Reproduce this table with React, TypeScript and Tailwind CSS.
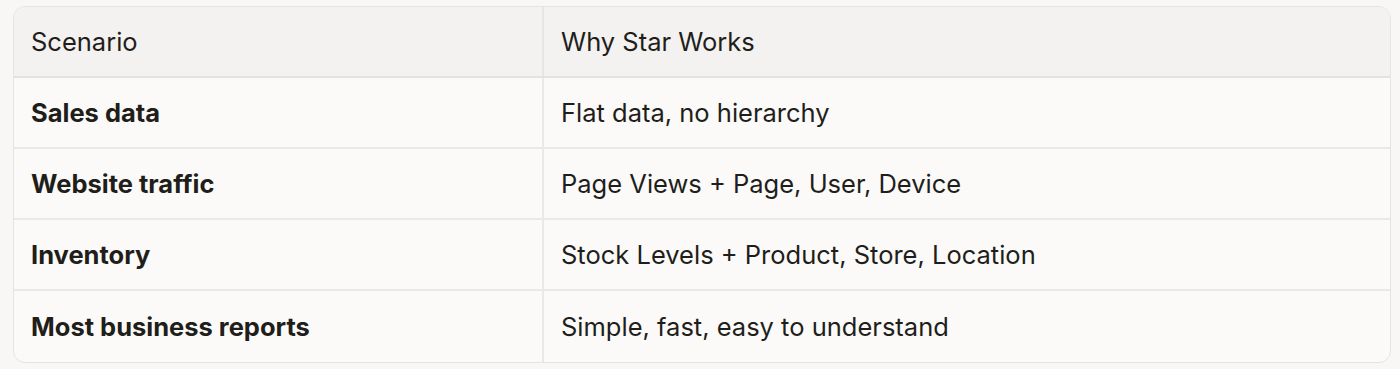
import React from "react";

const rows = [
  ["Sales data", "Flat data, no hierarchy"],
  ["Website traffic", "Page Views + Page, User, Device"],
  ["Inventory", "Stock Levels + Product, Store, Location"],
  ["Most business reports", "Simple, fast, easy to understand"],
];

export default function App() {
  return (
    <div className="w-[1400px] h-[369px] bg-[#f8f7f5] pt-[6px] pl-[13px] pr-[9px]" style={{ fontFamily: "Inter, 'Noto Sans', sans-serif" }}>
      <div className="rounded-[12px] border border-[#e6e4e0] overflow-hidden bg-[#fbfaf8] text-[#1f1e1b]">
        <div className="flex h-[71px] bg-[#f3f2f0] border-b-2 border-[#e4e2de]">
          <div className="w-[530px] border-r-2 border-[#e8e6e2] flex items-center pl-[17px] text-[25.5px] pt-[2px]">Scenario</div>
          <div className="flex-1 flex items-center pl-[17px] text-[25.5px] pt-[2px]">Why Star Works</div>
        </div>
        {rows.map((r, i) => (
          <div key={i} className={`flex h-[71px] ${i < rows.length - 1 ? "border-b-2 border-[#ebe9e5]" : ""}`}>
            <div className="w-[530px] border-r-2 border-[#ebe9e5] flex items-center pl-[17px] text-[25.5px] font-bold pt-[2px]">{r[0]}</div>
            <div className="flex-1 flex items-center pl-[17px] text-[25.5px] pt-[2px]">{r[1]}</div>
          </div>
        ))}
      </div>
    </div>
  );
}
